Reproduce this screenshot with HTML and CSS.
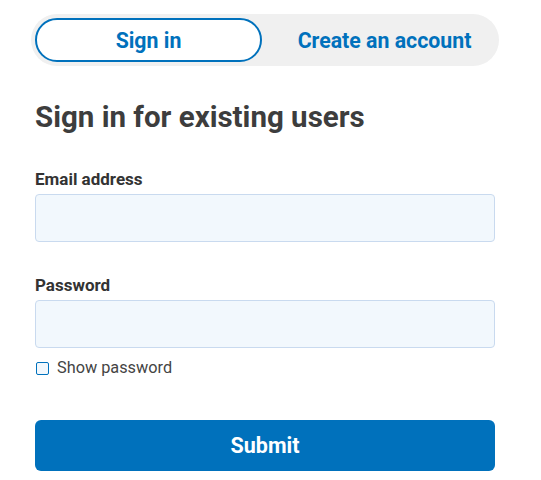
FILE: index.html
```html
<!DOCTYPE html>
<html lang="en">
<head>
    <meta charset="UTF-8">
    <meta name="viewport" content="width=device-width, initial-scale=1.0">
    <title>Sign in</title>
    <link rel="stylesheet" href="styles.css">
</head>
<body>

<main class="account">
    <div class="tabs">
        <a href="#" class="tab active">Sign in</a>
        <a href="#" class="tab">Create an account</a>
    </div>

    <h1>Sign in for existing users</h1>

    <form class="signin-form">
        <div class="field">
            <label for="email">Email address</label>
            <input type="email" id="email">
        </div>

        <div class="field">
            <label for="password">Password</label>
            <input type="password" id="password">
            <label class="show-password">
                <input type="checkbox" id="showPassword">
                <span>Show password</span>
            </label>
        </div>

        <button type="submit" class="submit">Submit</button>
    </form>
</main>

</body>
</html>
```

FILE: styles.css
```css
body {
    font-family: Roboto, "Liberation Sans", sans-serif;
    margin: 0;
    padding: 0;
    background-color: white;
    color: #3d3d3d;
}

.account {
    width: 460px;
    margin-left: 35px;
    padding-top: 14px;
}

.tabs {
    display: grid;
    grid-template-columns: 227px 1fr;
    margin: 0 -4px;
    padding: 4px;
    background-color: #f0f0f0;
    border-radius: 26px;
}

.tab {
    display: flex;
    align-items: center;
    justify-content: center;
    height: 44px;
    box-sizing: border-box;
    border: 2px solid transparent;
    border-radius: 22px;
    color: #0071bc;
    font-size: 21.3px;
    font-weight: bold;
    text-decoration: none;
}

.tab + .tab {
    padding-left: 12px;
}

.tab.active {
    background-color: white;
    border-color: #0071bc;
}

h1 {
    margin: 33px 0 0;
    font-size: 29.5px;
    line-height: 36px;
    font-weight: bold;
    color: #3d3d3d;
}

.signin-form {
    margin-top: 34px;
}

.field {
    margin-bottom: 33px;
}

.field label {
    display: block;
    font-size: 17px;
    font-weight: bold;
    line-height: 20px;
    margin-bottom: 5px;
    color: #333;
}

.field input[type="email"],
.field input[type="password"] {
    display: block;
    width: 100%;
    height: 48px;
    box-sizing: border-box;
    background-color: #f2f8fd;
    border: 1px solid #c9daef;
    border-radius: 4px;
    font-size: 16px;
    padding: 0 12px;
}

.field .show-password {
    display: flex;
    align-items: center;
    gap: 8px;
    margin: 10px 0 0;
    font-size: 16.3px;
    font-weight: normal;
    color: #444;
}

.show-password input {
    appearance: none;
    width: 13px;
    height: 13px;
    margin: 0 0 0 1px;
    border: 1px solid #0071bc;
    border-radius: 2px;
    background-color: #f2f8fd;
}

.signin-form .field:last-of-type {
    margin-bottom: 42px;
}

.submit {
    display: block;
    width: 100%;
    height: 51px;
    border: none;
    border-radius: 6px;
    background-color: #0071bc;
    color: white;
    font-family: inherit;
    font-size: 21.5px;
    font-weight: bold;
    cursor: pointer;
}
```
